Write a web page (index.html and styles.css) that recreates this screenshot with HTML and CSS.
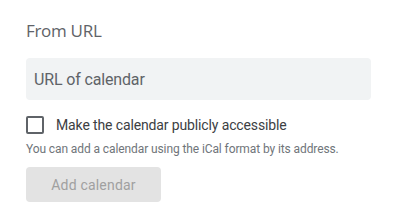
FILE: index.html
```html
<!DOCTYPE html>
<html lang="en">
<head>
	<meta charset="UTF-8">
	<title>From URL</title>
	<link rel="stylesheet" href="styles.css">
</head>
<body>
	<div class="wrap_form">
		<h2 class="form_title">From URL</h2>
		<div class="url_box">
			<input class="url_input" type="text" placeholder="URL of calendar">
		</div>
		<label class="check_row">
			<span class="check_box"></span>
			<span class="check_text">Make the calendar publicly accessible</span>
		</label>
		<p class="help_text">You can add a calendar using the iCal format by its address.</p>
		<button class="add_btn" disabled>Add calendar</button>
	</div>
</body>
</html>
```

FILE: styles.css
```css
/*样式重置*/
body{margin: 0; padding: 0; background: #fff; font-family: Roboto, 'Liberation Sans', Arial, sans-serif;}
h2,p{margin: 0; padding: 0;}

/*元素样式*/
.wrap_form{padding: 20px 29px 0 26px; display: flex; flex-direction: column; align-items: flex-start;}
.form_title{font-family: 'Open Sans', Roboto, sans-serif; font-weight: 400; font-size: 17px; line-height: 22px; color: #5f6368; letter-spacing: -0.3px;}
.url_box{margin-top: 16px; width: 100%; height: 42px; background-color: #f1f3f4; border-radius: 4px; display: flex; align-items: center;}
.url_input{border: none; background: transparent; outline: none; width: 100%; padding: 0 8px; font-family: Roboto, sans-serif; font-size: 16px; letter-spacing: -0.15px; color: #3c4043;}
.url_input::placeholder{color: #5f6368; opacity: 1;}
.check_row{margin-top: 16px; display: flex; align-items: center; cursor: pointer;}
.check_box{width: 14px; height: 14px; border: 2px solid #5f6368; border-radius: 2px;}
.check_text{margin-left: 12px; font-size: 14px; letter-spacing: -0.13px; color: #3c4043;}
.help_text{margin-top: 8px; font-size: 12px; letter-spacing: -0.1px; color: #70757a;}
.add_btn{margin-top: 11px; width: 135px; height: 35px; border: none; border-radius: 4px; background-color: #e3e3e3; color: #a0a0a0; font-family: Roboto, sans-serif; font-size: 14px; letter-spacing: 0.2px;}
```
